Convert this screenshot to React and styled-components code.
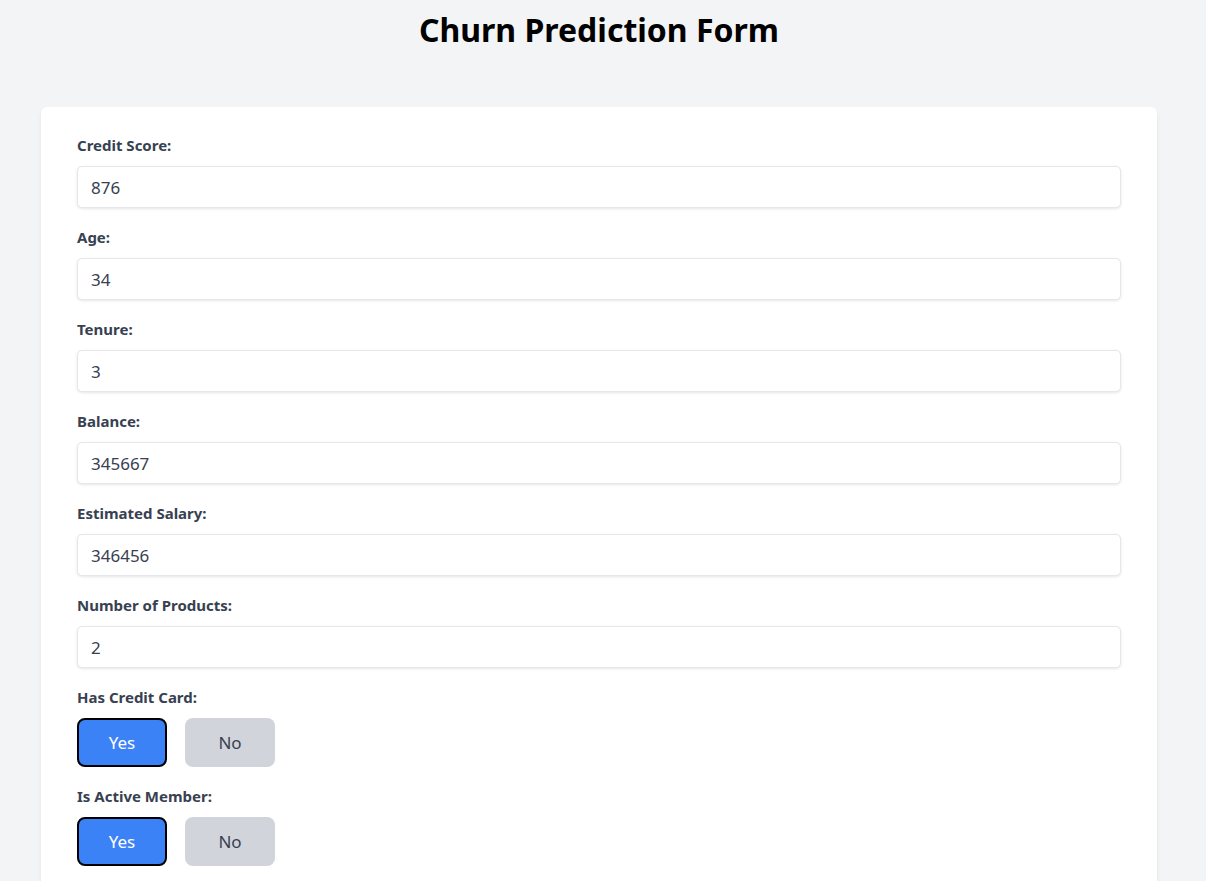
import React, { useState } from "react";
import styled, { createGlobalStyle } from "styled-components";

const GlobalStyle = createGlobalStyle`
  html, body {
    margin: 0;
    padding: 0;
    background: #f3f4f6;
    font-family: "Noto Sans", "Open Sans", sans-serif;
  }
  * { box-sizing: border-box; }
`;

const fields = [
  { name: "creditScore", label: "Credit Score:", value: "876" },
  { name: "age", label: "Age:", value: "34" },
  { name: "tenure", label: "Tenure:", value: "3" },
  { name: "balance", label: "Balance:", value: "345667" },
  { name: "salary", label: "Estimated Salary:", value: "346456" },
  { name: "products", label: "Number of Products:", value: "2" },
];

const App = () => {
  const [values, setValues] = useState(
    Object.fromEntries(fields.map((f) => [f.name, f.value]))
  );
  const [hasCard, setHasCard] = useState(true);
  const [isActive, setIsActive] = useState(true);

  return (
    <Page>
      <GlobalStyle />
      <Title>Churn Prediction Form</Title>
      <Card>
        {fields.map((f) => (
          <Group key={f.name}>
            <Label>{f.label}</Label>
            <Input
              value={values[f.name]}
              onChange={(e) => setValues({ ...values, [f.name]: e.target.value })}
            />
          </Group>
        ))}
        <Group>
          <Label>Has Credit Card:</Label>
          <Toggles>
            <Choice $active={hasCard} onClick={() => setHasCard(true)}>Yes</Choice>
            <Choice $active={!hasCard} onClick={() => setHasCard(false)}>No</Choice>
          </Toggles>
        </Group>
        <Group>
          <Label>Is Active Member:</Label>
          <Toggles>
            <Choice $active={isActive} onClick={() => setIsActive(true)}>Yes</Choice>
            <Choice $active={!isActive} onClick={() => setIsActive(false)}>No</Choice>
          </Toggles>
        </Group>
      </Card>
    </Page>
  );
};

const Page = styled.div`
  width: 1116px;
  margin-left: 41px;
  padding-top: 10px;
`;

const Title = styled.h1`
  margin: 0 0 57px;
  text-align: center;
  font-size: 32px;
  line-height: 40px;
  font-weight: 700;
  color: #000;
`;

const Card = styled.div`
  background: #fff;
  border-radius: 6px;
  box-shadow: 0 4px 6px -1px rgba(0, 0, 0, 0.08), 0 2px 4px -2px rgba(0, 0, 0, 0.06);
  padding: 28px 36px 40px;
`;

const Group = styled.div`
  margin-bottom: 19px;
`;

const Label = styled.label`
  display: block;
  font-size: 15px;
  line-height: 21px;
  font-weight: 700;
  color: #374151;
  margin-bottom: 10px;
`;

const Input = styled.input`
  display: block;
  width: 100%;
  height: 42px;
  padding: 0 13px;
  border: 1px solid #e5e7eb;
  border-radius: 5px;
  box-shadow: 0 1px 3px rgba(0, 0, 0, 0.1);
  font-family: inherit;
  font-size: 17px;
  color: #374151;
  outline: none;
`;

const Toggles = styled.div`
  display: flex;
  gap: 18px;
`;

const Choice = styled.button`
  width: 90px;
  height: 49px;
  border-radius: 8px;
  border: 2px solid ${(p) => (p.$active ? "#000" : "transparent")};
  background: ${(p) => (p.$active ? "#3b82f6" : "#d1d5db")};
  color: ${(p) => (p.$active ? "#fff" : "#374151")};
  font-family: inherit;
  font-size: 17px;
  cursor: pointer;
`;

export default App;
